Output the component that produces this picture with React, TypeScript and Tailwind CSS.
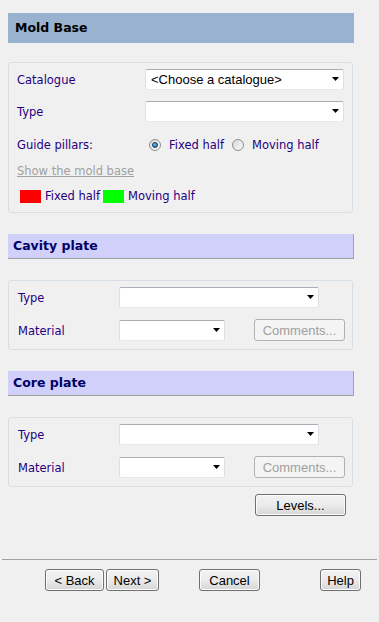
import React from "react";

const lbl = "font-['DejaVu_Sans',Verdana,sans-serif] text-[11.5px] text-[#26007f] whitespace-nowrap shrink-0 leading-none";

function Select({ w, text }: { w: string; text?: string }) {
  return (
    <div
      className={`${w} shrink-0 h-[21px] bg-white border border-[#dbdfe6] border-t-[#abadb3] border-b-[#e3e9ef] rounded-[2px] flex items-center pl-[5px] pr-[4px] font-['Liberation_Sans',Arial,sans-serif] text-[13px] text-black`}
    >
      <span className="flex-1 leading-none">{text}</span>
      <svg width="7" height="4" viewBox="0 0 7 4" className="mb-[1px]">
        <path d="M0 0H7L3.5 4Z" fill="#000" />
      </svg>
    </div>
  );
}

function Btn({ w, children, disabled, cls = "" }: { w: string; children: React.ReactNode; disabled?: boolean; cls?: string }) {
  return (
    <div
      className={`${w} shrink-0 h-[22px] rounded-[3px] border flex items-center justify-center font-['Liberation_Sans',Arial,sans-serif] text-[13px] leading-none whitespace-nowrap ${
        disabled
          ? "border-[#adb2b5] bg-[#f4f4f4] text-[#a0a0a0]"
          : "border-[#707070] bg-gradient-to-b from-[#f2f2f2] via-[#ebebeb] to-[#d6d6d6] text-black shadow-[inset_0_0_0_1px_#fcfcfc]"
      } ${cls}`}
    >
      {children}
    </div>
  );
}

function Radio({ on }: { on?: boolean }) {
  return (
    <div className="w-[12px] h-[12px] shrink-0 rounded-full border border-[#8c8f91] bg-gradient-to-br from-[#d8d8d8] to-[#fafafa] flex items-center justify-center">
      {on && <div className="w-[6px] h-[6px] rounded-full bg-[radial-gradient(circle_at_40%_35%,#6ec2e8,#1a5a8a)] border border-[#0d3b60]" />}
    </div>
  );
}

function SectionHeader({ title }: { title: string }) {
  return (
    <div className="w-[346px] h-[25px] bg-[#d0d0fa] border-b border-r border-[#a0a0a0] flex items-center pl-[5px] font-['DejaVu_Sans',Verdana,sans-serif] font-bold text-[12.5px] text-[#000066]">
      {title}
    </div>
  );
}

function PlateBox() {
  return (
    <div className="w-[345px] h-[70px] border border-[#d5dfe5] rounded-[3px] pt-[6px] pl-[9px] flex flex-col">
      <div className="flex items-center h-[21px]">
        <span className={`${lbl} w-[101px] pt-[3px]`}>Type</span>
        <Select w="w-[200px]" />
      </div>
      <div className="flex items-center h-[22px] mt-[11px]">
        <span className={`${lbl} w-[101px] pt-[3px]`}>Material</span>
        <Select w="w-[106px]" />
        <Btn w="w-[91px]" disabled cls="ml-[29px]">Comments...</Btn>
      </div>
    </div>
  );
}

export default function App() {
  return (
    <div className="w-[379px] h-[622px] bg-[#f0f0f0] flex flex-col overflow-hidden">
      <div className="pl-[8px] pt-[13px] flex flex-col">
        <div className="w-[346px] h-[30px] bg-[#98b2d0] flex items-center pl-[7px] font-['DejaVu_Sans',Verdana,sans-serif] font-bold text-[12.5px] text-black">
          Mold Base
        </div>

        <div className="mt-[19px] w-[345px] h-[151px] border border-[#d5dfe5] rounded-[3px] pt-[6px] pl-[8px] flex flex-col">
          <div className="flex items-center h-[21px]">
            <span className={`${lbl} w-[128px] pt-[3px]`}>Catalogue</span>
            <Select w="w-[199px]" text="<Choose a catalogue>" />
          </div>
          <div className="flex items-center h-[21px] mt-[11px]">
            <span className={`${lbl} w-[128px] pt-[3px]`}>Type</span>
            <Select w="w-[199px]" />
          </div>
          <div className="flex items-center h-[20px] mt-[13px]">
            <span className={`${lbl} w-[132px] pt-[1px]`}>Guide pillars:</span>
            <Radio on />
            <span className={`${lbl} ml-[8px] w-[63px] pt-[1px]`}>Fixed half</span>
            <Radio />
            <span className={`${lbl} ml-[8px] pt-[1px]`}>Moving half</span>
          </div>
          <div className="flex items-center h-[20px] mt-[6px]">
            <span className={`${lbl} !text-[#a0a0a0] underline pt-[1px]`}>Show the mold base</span>
          </div>
          <div className="flex items-center h-[20px] mt-[5px] pl-[3px]">
            <div className="w-[21px] h-[13px] bg-[#ff0000]" />
            <span className={`${lbl} ml-[4px] pt-[1px]`}>Fixed half</span>
            <div className="w-[21px] h-[13px] bg-[#00ff00] ml-[3px]" />
            <span className={`${lbl} ml-[4px] pt-[1px]`}>Moving half</span>
          </div>
        </div>

        <div className="mt-[21px]">
          <SectionHeader title="Cavity plate" />
        </div>
        <div className="mt-[21px]">
          <PlateBox />
        </div>

        <div className="mt-[21px]">
          <SectionHeader title="Core plate" />
        </div>
        <div className="mt-[21px]">
          <PlateBox />
        </div>

        <div className="mt-[7px] pl-[247px]">
          <Btn w="w-[91px]">Levels...</Btn>
        </div>
      </div>

      <div className="mt-[43px] mx-[2px] h-px bg-[#a0a0a0]" />

      <div className="mt-[9px] flex pl-[45px]">
        <Btn w="w-[59px]">&lt; Back</Btn>
        <Btn w="w-[53px]" cls="ml-[2px]">Next &gt;</Btn>
        <Btn w="w-[61px]" cls="ml-[40px]">Cancel</Btn>
        <Btn w="w-[41px]" cls="ml-[60px]">Help</Btn>
      </div>
    </div>
  );
}
